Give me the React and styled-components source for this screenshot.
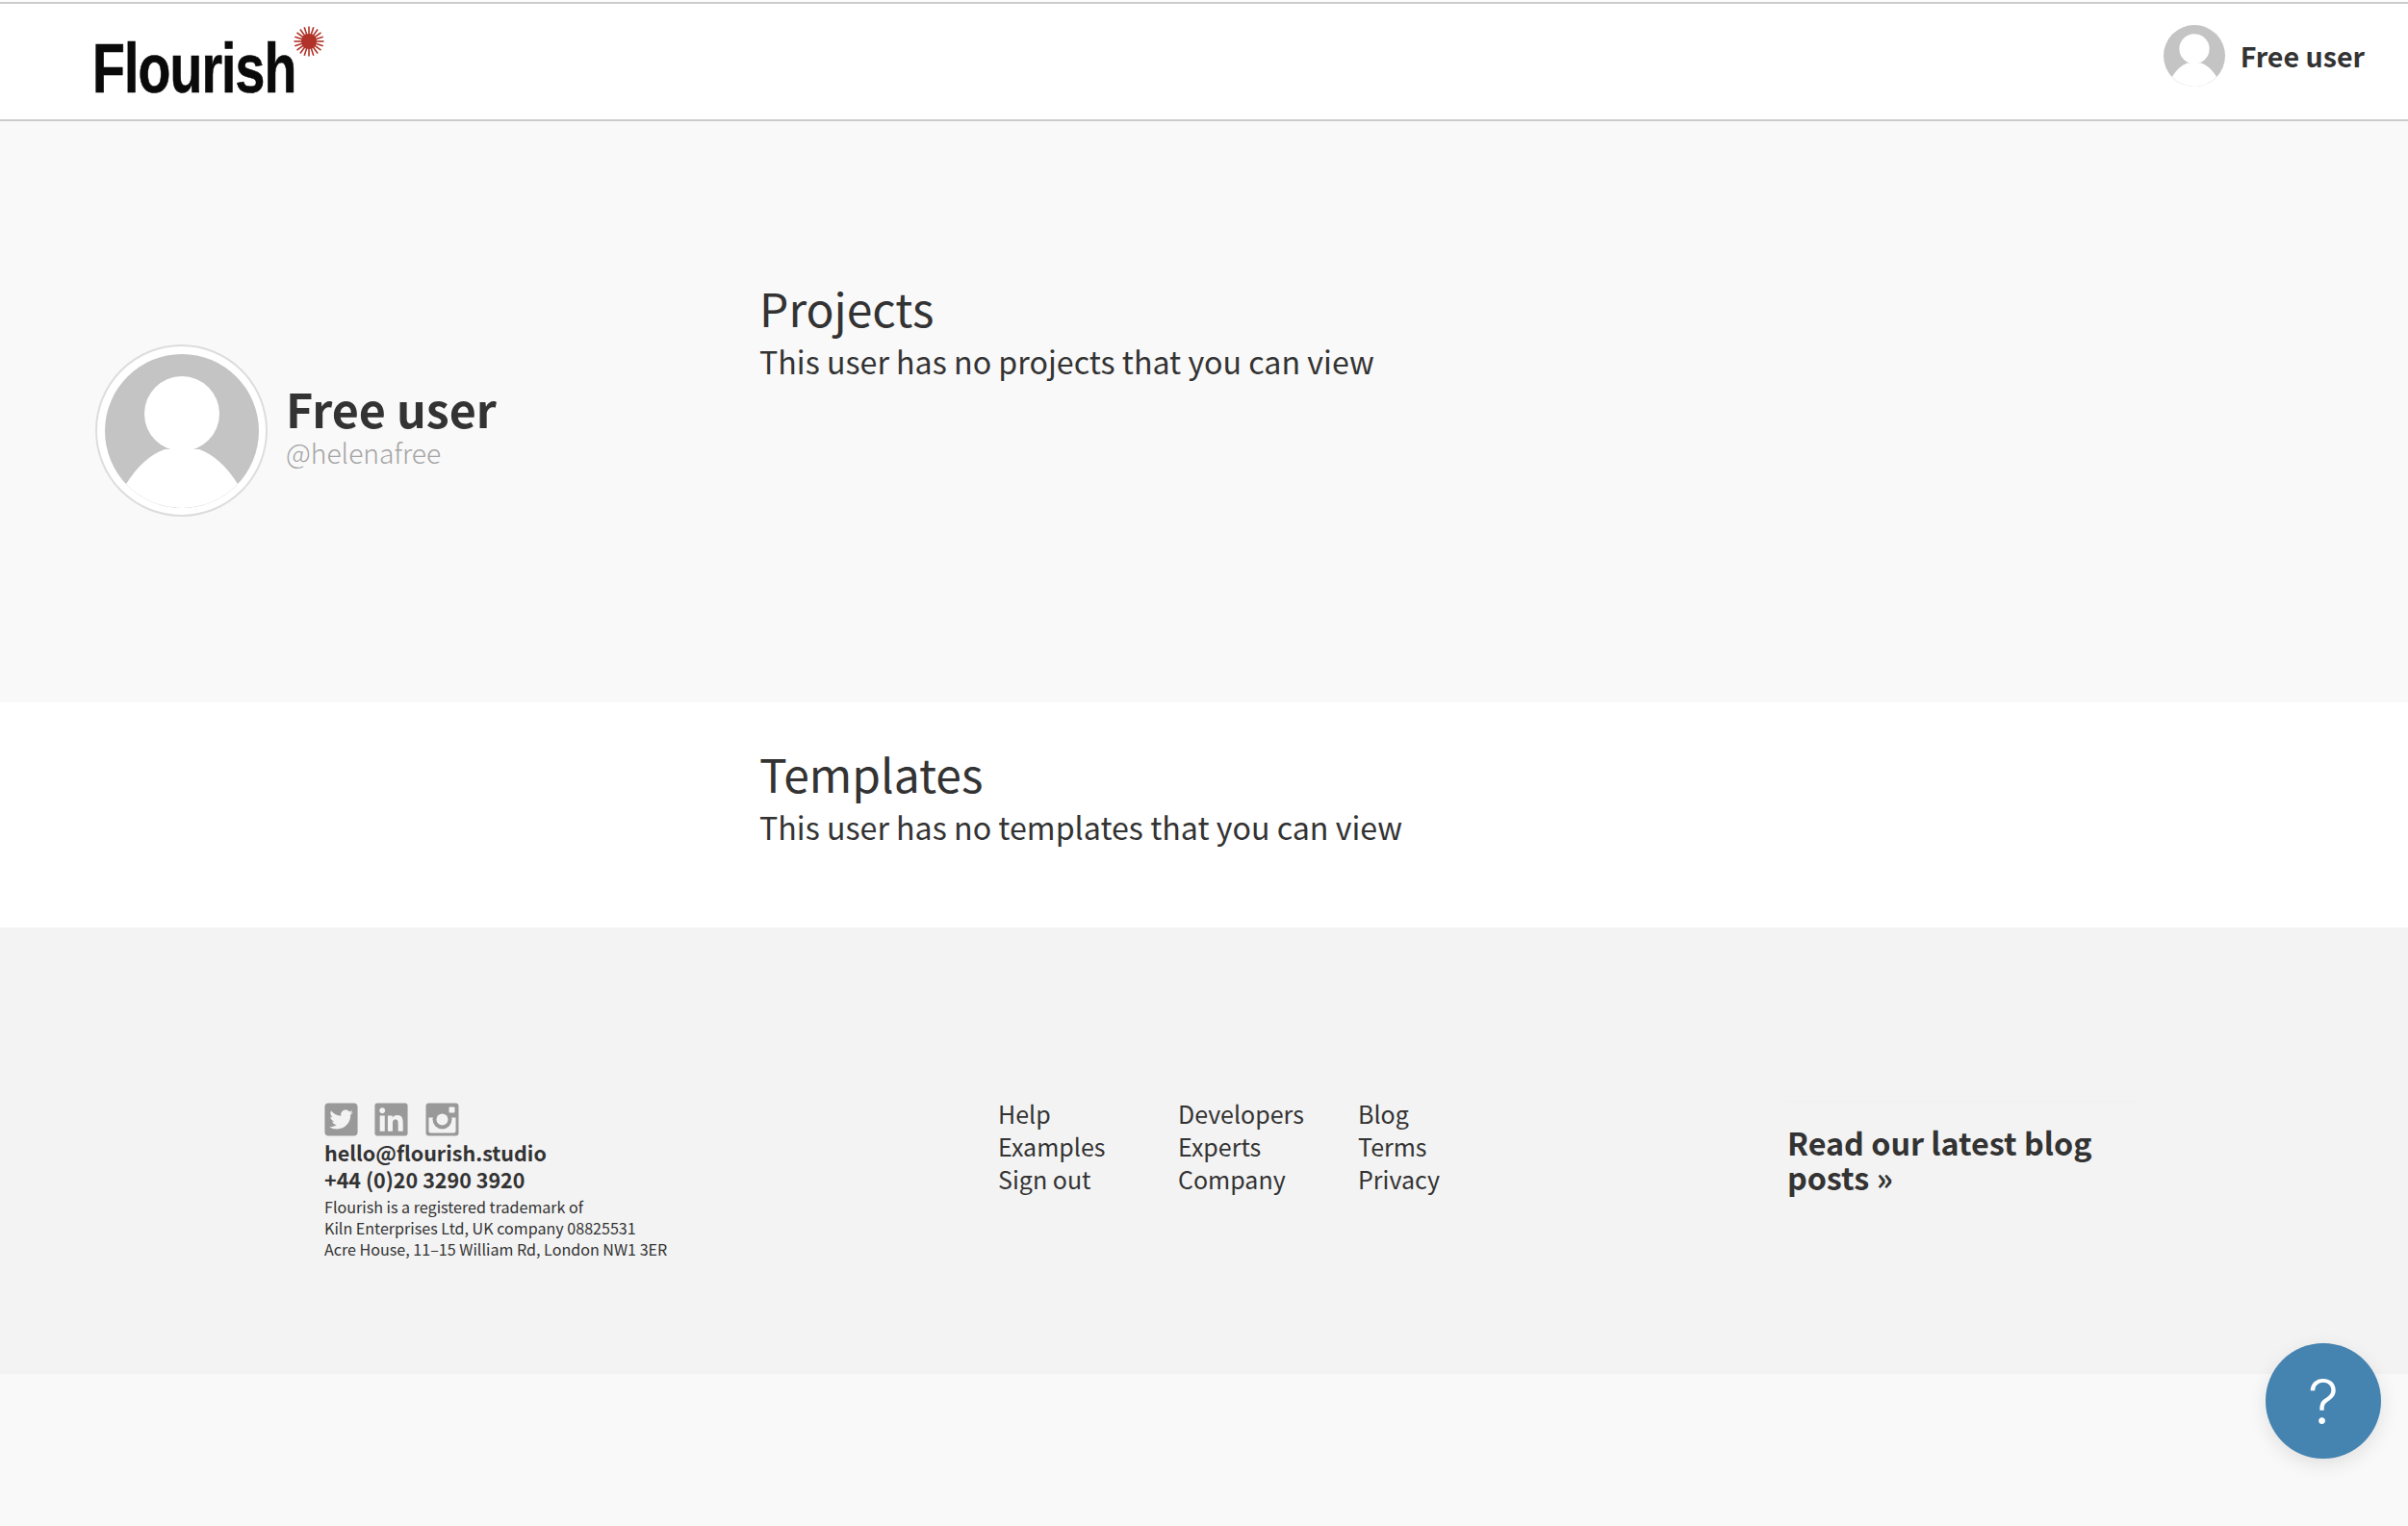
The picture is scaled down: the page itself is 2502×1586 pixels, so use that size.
import styled, { createGlobalStyle } from 'styled-components';
import { FaTwitterSquare, FaLinkedin } from 'react-icons/fa';

const GlobalStyle = createGlobalStyle`
  html, body {
    margin: 0;
    padding: 0;
    background: #f9f9f9;
    color: #333;
    font-family: "Noto Sans CJK SC", "Open Sans", sans-serif;
  }
`;

const Star = () => {
  const rays = Array.from({ length: 20 }, (_, i) => i * 18);
  return (
    <StarIcon viewBox="0 0 32 32">
      {rays.map((r) => (
        <line key={r} x1="16" y1="16" x2="16" y2="0.5" stroke="#b03228" strokeWidth="1.6" transform={`rotate(${r} 16 16)`} />
      ))}
      <circle cx="16" cy="16" r="8" fill="#b03228" />
    </StarIcon>
  );
};

const Avatar = ({ size }) => (
  <svg width={size} height={size} viewBox="0 0 160 160">
    <circle cx="80" cy="80" r="80" fill="#c4c4c4" />
    <circle cx="80" cy="62" r="39" fill="#fff" />
    <path d="M22 135 C34 116 48 104 62 99 L98 99 C112 104 126 116 138 135 A80 80 0 0 1 22 135 Z" fill="#fff" />
  </svg>
);

const Instagram = () => (
  <svg width="39" height="39" viewBox="-2.5 -2.5 39 39">
    <rect width="34" height="34" rx="3" fill="#999" />
    <path d="M3 15H31V29a2 2 0 0 1-2 2H5a2 2 0 0 1-2-2Z" fill="#f3f3f3" />
    <circle cx="17" cy="17" r="10" fill="#999" />
    <circle cx="17" cy="17" r="6" fill="#f3f3f3" />
    <rect x="24" y="4" width="6" height="6" rx="1" fill="#f3f3f3" />
  </svg>
);

export default function App() {
  return (
    <Page>
      <GlobalStyle />
      <Header>
        <Logo>
          <LogoText>Flourish</LogoText>
          <Star />
        </Logo>
        <UserLink>
          <Avatar size={64} />
          <UserLinkName>Free user</UserLinkName>
        </UserLink>
      </Header>

      <ProfileSection>
        <Profile>
          <AvatarRing>
            <Avatar size={160} />
          </AvatarRing>
          <ProfileText>
            <ProfileName>Free user</ProfileName>
            <ProfileHandle>@helenafree</ProfileHandle>
          </ProfileText>
        </Profile>
        <Listing>
          <ListingTitle>Projects</ListingTitle>
          <ListingNote>This user has no projects that you can view</ListingNote>
        </Listing>
      </ProfileSection>

      <TemplatesSection>
        <Listing>
          <ListingTitle>Templates</ListingTitle>
          <ListingNote>This user has no templates that you can view</ListingNote>
        </Listing>
      </TemplatesSection>

      <Footer>
        <Contact>
          <Socials>
            <FaTwitterSquare size={39} color="#999" />
            <FaLinkedin size={39} color="#999" />
            <Instagram />
          </Socials>
          <ContactLine>hello@flourish.studio</ContactLine>
          <ContactLine>+44 (0)20 3290 3920</ContactLine>
          <Legal>
            Flourish is a registered trademark of<br />
            Kiln Enterprises Ltd, UK company 08825531<br />
            Acre House, 11–15 William Rd, London NW1 3ER
          </Legal>
        </Contact>
        <Links>
          <LinkColumn><span>Help</span><span>Examples</span><span>Sign out</span></LinkColumn>
          <LinkColumn><span>Developers</span><span>Experts</span><span>Company</span></LinkColumn>
          <LinkColumn><span>Blog</span><span>Terms</span><span>Privacy</span></LinkColumn>
        </Links>
        <BlogLink>Read our latest blog posts »</BlogLink>
      </Footer>

      <Bottom />
      <HelpButton>?</HelpButton>
    </Page>
  );
}

const Page = styled.div`
  position: relative;
  height: 1584px;
  padding-top: 2px;
  overflow: hidden;
  background: #fdfdfd;
`;

const Header = styled.header`
  box-sizing: border-box;
  height: 124px;
  display: flex;
  justify-content: space-between;
  background: #fff;
  border-top: 2px solid #ccc;
  border-bottom: 2px solid #ccc;
  padding: 0 45px 0 96px;
`;

const Logo = styled.div`
  position: relative;
  padding-top: 25px;
`;

const LogoText = styled.div`
  font-family: "Liberation Sans", Arial, sans-serif;
  font-weight: 700;
  font-size: 73px;
  line-height: 84px;
  letter-spacing: -1.2px;
  color: #0a0a0a;
  -webkit-text-stroke: 0.6px #0a0a0a;
  transform: scaleX(0.76);
  transform-origin: left center;
`;

const StarIcon = styled.svg`
  position: absolute;
  left: 209px;
  top: 23px;
  width: 32px;
  height: 32px;
`;

const UserLink = styled.div`
  display: flex;
  align-items: flex-start;
  gap: 16px;
  padding-top: 22px;
`;

const UserLinkName = styled.div`
  font-size: 28.6px;
  font-weight: 700;
  line-height: 64px;
`;

const ProfileSection = styled.section`
  box-sizing: border-box;
  height: 604px;
  display: flex;
  padding: 160px 0 0 99px;
  background: #f9f9f9;
`;

const Profile = styled.div`
  width: 690px;
  display: flex;
  gap: 19px;
  padding-top: 72px;
`;

const AvatarRing = styled.div`
  box-sizing: border-box;
  width: 179px;
  height: 179px;
  padding: 7.5px;
  border: 2px solid #ddd;
  border-radius: 50%;
  background: #fff;
  line-height: 0;
  flex: none;
`;

const ProfileText = styled.div`
  padding-top: 40px;
`;

const ProfileName = styled.div`
  font-size: 48.4px;
  font-weight: 700;
  line-height: 52px;
`;

const ProfileHandle = styled.div`
  margin-top: 4px;
  font-size: 28.3px;
  font-weight: 300;
  line-height: 32px;
  color: #a4a4a4;
`;

const Listing = styled.div``;

const ListingTitle = styled.h2`
  margin: 0;
  font-size: 48px;
  font-weight: 400;
  line-height: 67px;
`;

const ListingNote = styled.p`
  margin: 0;
  font-size: 32.2px;
  font-weight: 400;
  line-height: 44px;
`;

const TemplatesSection = styled.section`
  box-sizing: border-box;
  height: 234px;
  background: #fff;
  padding: 40px 0 0 789px;
`;

const Footer = styled.footer`
  box-sizing: border-box;
  height: 464px;
  background: #f3f3f3;
  display: flex;
  padding: 180px 0 0 337px;
`;

const Contact = styled.div`
  width: 700px;
`;

const Socials = styled.div`
  display: flex;
  align-items: center;
  gap: 13.5px;
  height: 36px;
  margin: 1px 0 3px -2.5px;
`;

const ContactLine = styled.div`
  font-size: 21.5px;
  font-weight: 700;
  line-height: 28px;
`;

const Legal = styled.div`
  margin-top: 3px;
  font-size: 16.1px;
  line-height: 22px;
  font-weight: 400;
`;

const Links = styled.div`
  width: 820px;
  display: flex;
  margin-top: -4px;
`;

const LinkColumn = styled.div`
  width: 187px;
  display: flex;
  flex-direction: column;
  font-size: 25px;
  font-weight: 400;
  line-height: 34px;
`;

const BlogLink = styled.div`
  width: 365px;
  height: fit-content;
  border-top: 2px solid #f1f1f1;
  padding-top: 23px;
  font-size: 32.3px;
  font-weight: 700;
  line-height: 36px;
`;

const Bottom = styled.div`
  height: 158px;
  background: #f9f9f9;
`;

const HelpButton = styled.div`
  position: absolute;
  left: 2354px;
  top: 1396px;
  width: 120px;
  height: 120px;
  border-radius: 50%;
  background: #4583b0;
  box-shadow: 0 6px 20px rgba(0, 0, 0, 0.1);
  color: #fff;
  font-family: Inter, sans-serif;
  font-weight: 300;
  font-size: 64px;
  display: flex;
  align-items: center;
  justify-content: center;
`;
